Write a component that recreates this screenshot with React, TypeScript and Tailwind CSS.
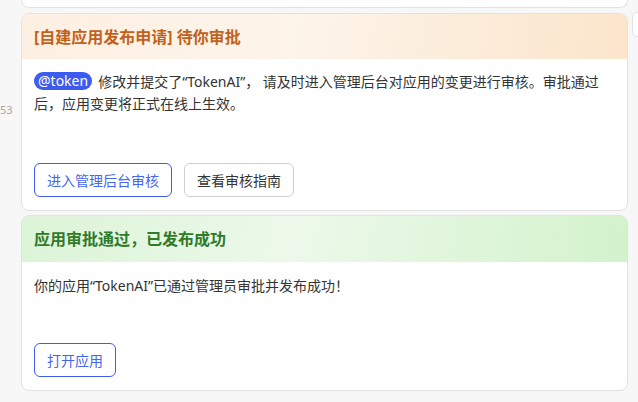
import type { ReactNode } from "react";

const font = {
  fontFamily:
    '"Segoe UI", "Noto Sans", "Microsoft YaHei", "Noto Sans CJK SC", sans-serif',
};

type NoticeCardProps = {
  tone: "orange" | "green";
  title: string;
  children: ReactNode;
  actions: ReactNode;
  bodyClass: string;
};

const NoticeCard = ({ tone, title, children, actions, bodyClass }: NoticeCardProps) => {
  const isOrange = tone === "orange";

  return (
    <div className="flex flex-col overflow-hidden rounded-[8px] border border-[#e2e2e2] bg-white">
      <div
        className={
          isOrange
            ? "flex h-[45px] items-center bg-[linear-gradient(100deg,#fdf0e2_0%,#fdf4ea_45%,#fbe5cb_100%)] px-[12px]"
            : "flex h-[46px] items-center bg-[linear-gradient(100deg,#dcf4d7_0%,#ecf9ea_45%,#d3f2cc_100%)] px-[12px]"
        }
      >
        <h3
          className={
            isOrange
              ? "text-[16px] font-bold text-[#c2611a]"
              : "text-[16px] font-bold text-[#2f7a2b]"
          }
        >
          {title}
        </h3>
      </div>
      <div className={"flex flex-col px-[12px] " + bodyClass}>
        <div className="pr-[16px] text-[14px] leading-[22px] text-[#333]">{children}</div>
        <div className="mt-auto flex gap-[12px]">{actions}</div>
      </div>
    </div>
  );
};

export default function App() {
  return (
    <div
      className="flex h-[402px] w-[638px] overflow-hidden bg-[#f7f7f7]"
      style={font}
    >
      {/* left gutter */}
      <div className="w-[21px] shrink-0 overflow-hidden pt-[103px]">
        <span className="block text-[11px] leading-[14px] text-[#a8a8a8]">53</span>
      </div>

      {/* main column */}
      <div className="flex w-[607px] shrink-0 flex-col">
        <div className="h-[8px] rounded-b-[8px] border-x border-b border-[#e2e2e2] bg-white" />

        <div className="mt-[5px]">
          <NoticeCard
            tone="orange"
            title="[自建应用发布申请] 待你审批"
            bodyClass="h-[151px] pt-[12px] pb-[13px]"
            actions={
              <>
                <button className="h-[34px] rounded-[6px] border border-[#3d5cf0] px-[12px] text-[14px] text-[#4466f2]">
                  进入管理后台审核
                </button>
                <button className="h-[34px] rounded-[6px] border border-[#cfcfcf] px-[12px] text-[14px] text-[#333]">
                  查看审核指南
                </button>
              </>
            }
          >
            <span className="mr-[6px] inline-block rounded-full bg-[#3d5af1] px-[4px] align-[1px] text-[14px] leading-[18px] text-white">
              @token
            </span>
            修改并提交了“TokenAI”， 请及时进入管理后台对应用的变更进行审核。审批通过后，应用变更将正式在线上生效。
          </NoticeCard>
        </div>

        <div className="mt-[4px]">
          <NoticeCard
            tone="green"
            title="应用审批通过，已发布成功"
            bodyClass="h-[128px] pt-[13px] pb-[13px]"
            actions={
              <button className="h-[34px] rounded-[6px] border border-[#3d5cf0] px-[12px] text-[14px] text-[#4466f2]">
                打开应用
              </button>
            }
          >
            你的应用“TokenAI”已通过管理员审批并发布成功！
          </NoticeCard>
        </div>
      </div>

      {/* right edge */}
      <div className="ml-[4px] flex-1 pt-[12px]">
        <div className="h-[25px] rounded-l-[5px] border-y border-l border-[#e2e2e2] bg-white" />
      </div>
    </div>
  );
}
